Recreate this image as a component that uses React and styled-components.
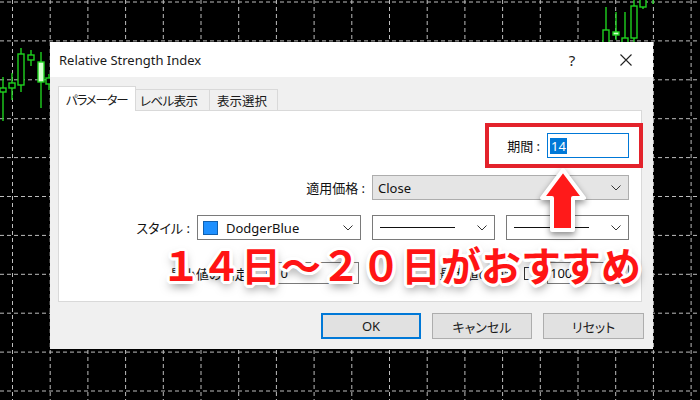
import React from "react";
import styled, { createGlobalStyle } from "styled-components";

const GlobalStyle = createGlobalStyle`
    body {
        margin: 0;
        background: #000000;
        font-family: "Noto Sans", "Noto Sans CJK JP", sans-serif;
    }
`;

const Page = styled.div`
    position: relative;
    width: 700px;
    height: 400px;
    overflow: hidden;
    background: #000000;
    padding: 42px 0 0 50px;
    box-sizing: border-box;
`;

const ChartLayer = styled.svg`
    position: absolute;
    left: 0;
    top: 0;
`;

const Dialog = styled.div`
    position: relative;
    z-index: 1;
    width: 603px;
    height: 307px;
    background: #f0f0f0;
    display: flex;
    flex-direction: column;
    color: #111111;
    font-size: 13px;
    font-feature-settings: "palt";
`;

const TitleBar = styled.div`
    height: 35px;
    background: #ffffff;
    display: flex;
    align-items: center;
    padding-left: 9px;
`;

const Title = styled.span`
    flex: 1;
    font-size: 13px;
    color: #1a1a1a;
`;

const TitleControls = styled.div`
    display: flex;
    gap: 8px;
    margin-right: 4px;
    height: 100%;
`;

const CaptionButton = styled.div`
    width: 46px;
    display: flex;
    align-items: center;
    justify-content: center;
    font-size: 15px;
    color: #222222;
`;

const Body = styled.div`
    flex: 1;
    padding: 9px 11px 0 8px;
    display: flex;
    flex-direction: column;
`;

const TabStrip = styled.div`
    position: relative;
    z-index: 1;
    display: flex;
    align-items: flex-end;
    height: 24px;
`;

const Tab = styled.div`
    box-sizing: border-box;
    width: ${p => p.$w}px;
    height: ${p => (p.$active ? 25 : 21)}px;
    margin-bottom: ${p => (p.$active ? -1 : 0)}px;
    background: ${p => (p.$active ? "#ffffff" : "#f0f0f0")};
    border: 1px solid #d9d9d9;
    border-bottom: none;
    margin-left: ${p => (p.$active ? 0 : -1)}px;
    display: flex;
    align-items: center;
    padding-left: ${p => p.$pad}px;
    font-size: 12.5px;
    letter-spacing: ${p => p.$tight || 0}px;
    color: #1a1a1a;
    white-space: nowrap;
    overflow: hidden;
`;

const Panel = styled.div`
    box-sizing: border-box;
    height: 192px;
    background: #ffffff;
    border: 1px solid #d9d9d9;
    padding: 22px 12px 0 0;
    display: flex;
    flex-direction: column;
`;

const Row = styled.div`
    display: flex;
    align-items: center;
    justify-content: flex-end;
    height: ${p => p.$h || 25}px;
    margin-top: ${p => p.$top || 0}px;
    gap: ${p => p.$gap || 0}px;
`;

const Label = styled.span`
    margin-right: 7px;
    white-space: nowrap;
`;

const TextInput = styled.div`
    box-sizing: border-box;
    width: ${p => p.$w}px;
    height: ${p => p.$h || 25}px;
    background: #ffffff;
    border: 1px solid ${p => (p.$focus ? "#0078d7" : "#7a7a7a")};
    display: flex;
    align-items: center;
    padding-left: 2px;
    font-size: 13px;
`;

const Selected = styled.span`
    background: #0078d7;
    color: #ffffff;
    padding: 0 1px;
    line-height: 16px;
`;

const Combo = styled.div`
    box-sizing: border-box;
    width: ${p => p.$w}px;
    height: 25px;
    margin-left: ${p => p.$gapLeft || 0}px;
    background: ${p => (p.$flat ? "#e5e5e5" : "#ffffff")};
    border: 1px solid ${p => (p.$flat ? "#adadad" : "#7a7a7a")};
    display: flex;
    align-items: center;
    padding: 0 7px 0 5px;
    gap: 8px;
`;

const ComboText = styled.span`
    flex: 1;
    font-size: 13px;
`;

const Swatch = styled.span`
    width: 15px;
    height: 14px;
    background: ${p => p.$color};
    border: 1px solid #1060b0;
    box-sizing: border-box;
`;

const LineSample = styled.span`
    flex: 1;
    height: 1px;
    background: #111111;
    margin: 0 14px 0 2px;
`;

const CheckBox = styled.span`
    box-sizing: border-box;
    width: 13px;
    height: 13px;
    border: 1px solid #333333;
    background: #ffffff;
    margin-right: 10px;
`;

const FieldGroup = styled.div`
    display: flex;
    align-items: center;
`;

const ButtonRow = styled.div`
    display: flex;
    justify-content: flex-end;
    gap: 11px;
    margin-top: 11px;
    margin-right: -2px;
`;

const Button = styled.div`
    box-sizing: border-box;
    width: ${p => p.$w || 100}px;
    height: 26px;
    background: #e1e1e1;
    border: ${p => (p.$primary ? "2px solid #0078d7" : "1px solid #adadad")};
    display: flex;
    align-items: center;
    justify-content: center;
    font-size: 13px;
    color: #1a1a1a;
`;

const Highlight = styled.div`
    position: absolute;
    z-index: 2;
    left: 485px;
    top: 123px;
    width: 158px;
    height: 45px;
    box-sizing: border-box;
    border: 4px solid #e3222b;
`;

const ArrowLayer = styled.svg`
    position: absolute;
    z-index: 2;
    left: 532px;
    top: 164px;
    filter: drop-shadow(0 3px 3px rgba(0, 0, 0, 0.45));
`;

const Caption = styled.div`
    position: absolute;
    z-index: 3;
    left: 161px;
    top: 238px;
    font-family: "Noto Sans CJK JP", sans-serif;
    font-weight: 700;
    font-size: 40px;
    line-height: 52px;
    color: #ff1414;
    white-space: nowrap;
    text-shadow:
        3px 0 0 #fff, -3px 0 0 #fff, 0 3px 0 #fff, 0 -3px 0 #fff,
        2px 2px 0 #fff, -2px 2px 0 #fff, 2px -2px 0 #fff, -2px -2px 0 #fff,
        3px 1px 0 #fff, -3px 1px 0 #fff, 3px -1px 0 #fff, -3px -1px 0 #fff,
        1px 3px 0 #fff, -1px 3px 0 #fff, 1px -3px 0 #fff, -1px -3px 0 #fff,
        0 5px 10px rgba(0, 0, 0, 0.5);
`;

const candles = [
    { x: 3, wt: 77, wb: 121, bt: 88, bb: 92 },
    { x: 12, wt: 73, wb: 100, bt: 83, bb: 88 },
    { x: 21, wt: 48, wb: 92, bt: 54, bb: 85 },
    { x: 31, wt: 50, wb: 66, bt: 55, bb: 60 },
    { x: 41, wt: 52, wb: 108, bt: 62, bb: 82, fill: true },
    { x: 49, wt: 74, wb: 90, bt: 78, bb: 84 },
    { x: 606, wt: 7, wb: 44, bt: 30, bb: 44 },
    { x: 616, wt: 12, wb: 40, bt: 32, bb: 35, fill: true },
    { x: 625, wt: 12, wb: 46, bt: 38, bb: 46 },
    { x: 634, wt: 0, wb: 42, bt: 6, bb: 38 },
    { x: 643, wt: 0, wb: 9, bt: -2, bb: 7 },
    { x: 653, wt: 0, wb: 4, bt: -4, bb: -1 },
];

function Chart() {
    const vx = [];
    for (let x = 12.5; x < 700; x += 37.7) vx.push(x);
    const hy = [];
    for (let y = 2; y < 400; y += 38.9) hy.push(y);

    return (
        <ChartLayer width="700" height="400">
            <g stroke="#bdbdbd" strokeWidth="1" strokeDasharray="4 3">
                {vx.map(x => <line key={"v" + x} x1={x} y1="0" x2={x} y2="400" />)}
                {hy.map(y => <line key={"h" + y} x1="0" y1={y} x2="700" y2={y} />)}
            </g>
            <g stroke="#1fd21f" strokeWidth="1.4">
                {candles.map(c => (
                    <g key={c.x}>
                        <line x1={c.x} y1={c.wt} x2={c.x} y2={c.wb} />
                        <rect
                            x={c.x - 3}
                            y={c.bt}
                            width="6"
                            height={c.bb - c.bt}
                            fill={c.fill ? "#d6ffd0" : "#000"}
                        />
                    </g>
                ))}
            </g>
        </ChartLayer>
    );
}

const Chevron = () => (
    <svg width="10" height="6" viewBox="0 0 10 6">
        <polyline points="0.5,0.5 5,5 9.5,0.5" fill="none" stroke="#333" strokeWidth="1" />
    </svg>
);

const CloseGlyph = () => (
    <svg width="12" height="12" viewBox="0 0 12 12">
        <path d="M0.5 0.5 L11.5 11.5 M11.5 0.5 L0.5 11.5" stroke="#222" strokeWidth="1.1" />
    </svg>
);

function App() {
    return (
        <Page>
            <GlobalStyle />
            <Chart />

            <Dialog>
                <TitleBar>
                    <Title>Relative Strength Index</Title>
                    <TitleControls>
                        <CaptionButton>?</CaptionButton>
                        <CaptionButton>
                            <CloseGlyph />
                        </CaptionButton>
                    </TitleControls>
                </TitleBar>

                <Body>
                    <TabStrip>
                        <Tab $active $w={78} $pad={7} $tight={-1.2}>パラメーター</Tab>
                        <Tab $w={75} $pad={4} $tight={-0.6}>レベル表示</Tab>
                        <Tab $w={69} $pad={7}>表示選択</Tab>
                    </TabStrip>

                    <Panel>
                        <Row>
                            <Label>期間 :</Label>
                            <TextInput $w={82} $focus>
                                <Selected>14</Selected>
                            </TextInput>
                        </Row>

                        <Row $top={17}>
                            <Label>適用価格 :</Label>
                            <Combo $w={257} $flat>
                                <ComboText>Close</ComboText>
                                <Chevron />
                            </Combo>
                        </Row>

                        <Row $top={15}>
                            <Label>スタイル :</Label>
                            <Combo $w={164}>
                                <Swatch $color="#1e90ff" />
                                <ComboText>DodgerBlue</ComboText>
                                <Chevron />
                            </Combo>
                            <Combo $w={123} $gapLeft={11}>
                                <LineSample />
                                <Chevron />
                            </Combo>
                            <Combo $w={123} $gapLeft={11}>
                                <LineSample />
                                <Chevron />
                            </Combo>
                        </Row>

                        <Row $top={22} $h={22} $gap={80}>
                            <FieldGroup>
                                <Label>最小値の固定</Label>
                                <CheckBox />
                                <TextInput $w={82} $h={22}>0</TextInput>
                            </FieldGroup>
                            <FieldGroup>
                                <Label>最大値の固定</Label>
                                <CheckBox />
                                <TextInput $w={82} $h={22}>100</TextInput>
                            </FieldGroup>
                        </Row>
                    </Panel>

                    <ButtonRow>
                        <Button $primary>OK</Button>
                        <Button>キャンセル</Button>
                        <Button $w={101}>リセット</Button>
                    </ButtonRow>
                </Body>
            </Dialog>

            <Highlight />
            <ArrowLayer width="64" height="76" viewBox="0 0 64 76">
                <polygon
                    points="31,6 52,34 41,34 41,66 20,66 20,34 10,34"
                    fill="#ff1a1a"
                    stroke="#ffffff"
                    strokeWidth="4"
                    strokeLinejoin="round"
                />
            </ArrowLayer>
            <Caption>１４日～２０日がおすすめ</Caption>
        </Page>
    );
}

export default App;
